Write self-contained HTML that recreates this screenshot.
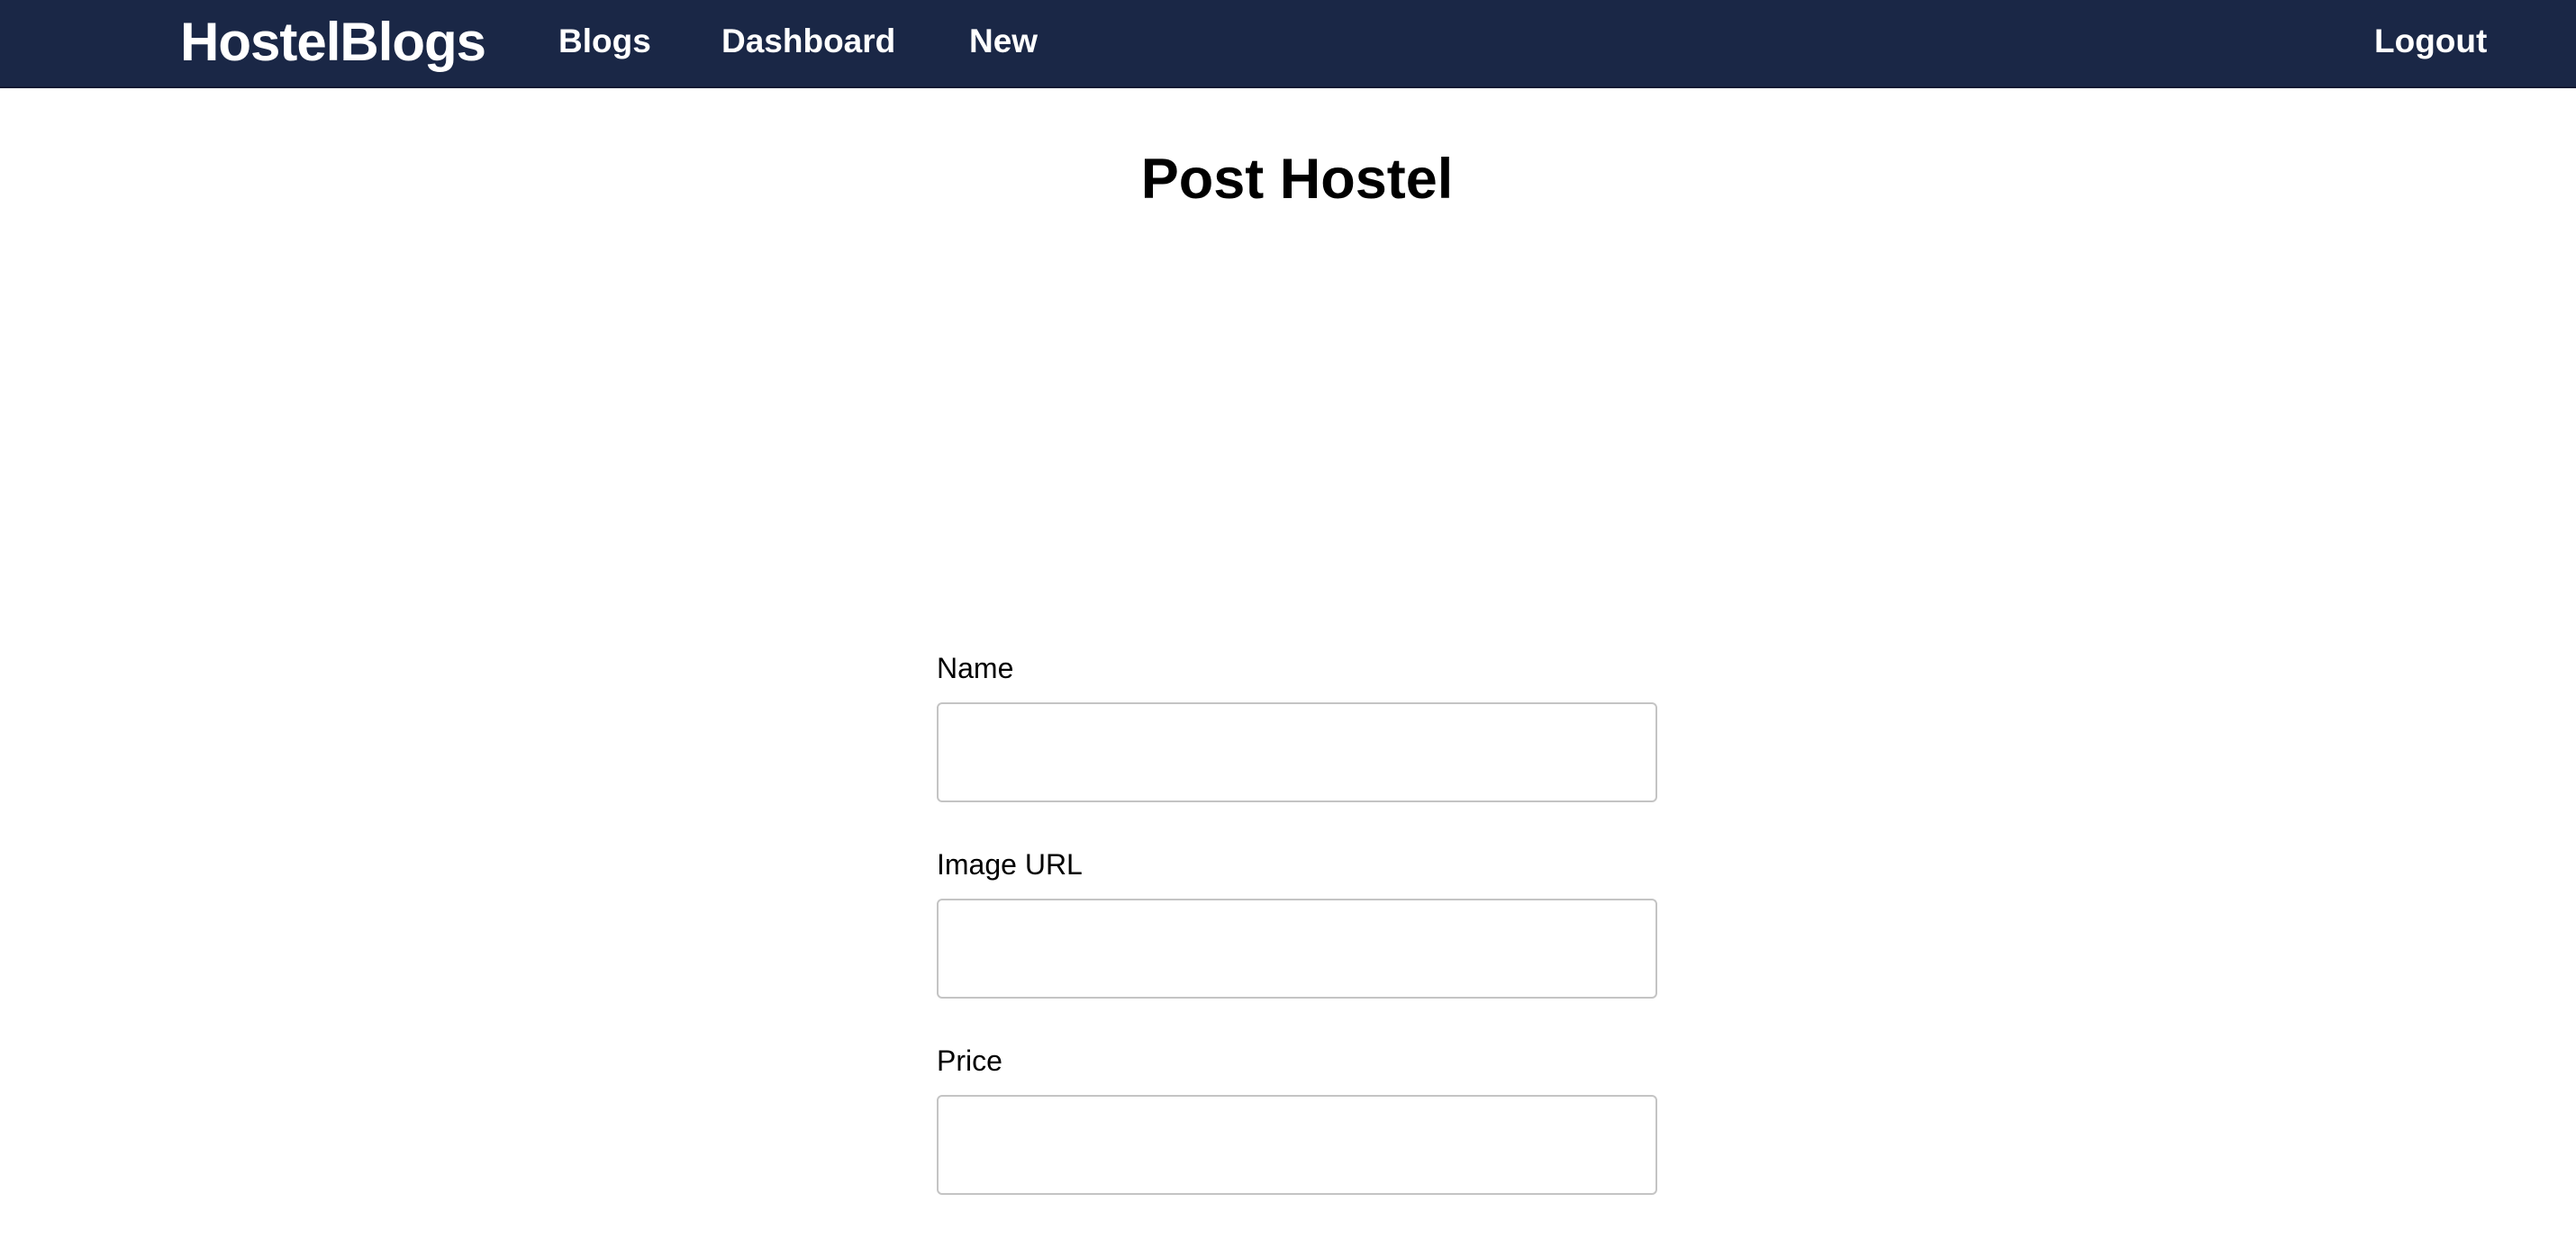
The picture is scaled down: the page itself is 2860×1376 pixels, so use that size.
<!DOCTYPE html>
<html><head><meta charset="utf-8"><style>
*{margin:0;padding:0;box-sizing:border-box}
body{width:2860px;height:1376px;background:#fff;font-family:"Liberation Sans",Arial,sans-serif;position:relative;overflow:hidden;color:#000}
nav{position:absolute;left:0;top:0;width:2860px;height:98px;background:#1a2746;border-bottom:2px solid #0f1a33}
nav span{position:absolute;color:#fff;font-weight:bold;white-space:nowrap}
.logo{left:200px;top:12px;font-size:60px;letter-spacing:-1px}
.l{top:25px;font-size:37px}
h1{position:absolute;left:0;width:2880px;text-align:center;top:163px;font-size:63px;font-weight:bold}
label{position:absolute;left:1040px;font-size:32px}
.in{position:absolute;left:1040px;width:800px;height:111px;border:2px solid #c4c4c4;border-radius:6px}
</style></head><body>
<nav>
<span class="logo">HostelBlogs</span>
<span class="l" style="left:620px">Blogs</span>
<span class="l" style="left:801px">Dashboard</span>
<span class="l" style="left:1076px">New</span>
<span class="l" style="left:2636px">Logout</span>
</nav>
<h1>Post Hostel</h1>
<label style="top:724px">Name</label>
<div class="in" style="top:780px"></div>
<label style="top:942px">Image URL</label>
<div class="in" style="top:998px"></div>
<label style="top:1160px">Price</label>
<div class="in" style="top:1216px"></div>
</body></html>
